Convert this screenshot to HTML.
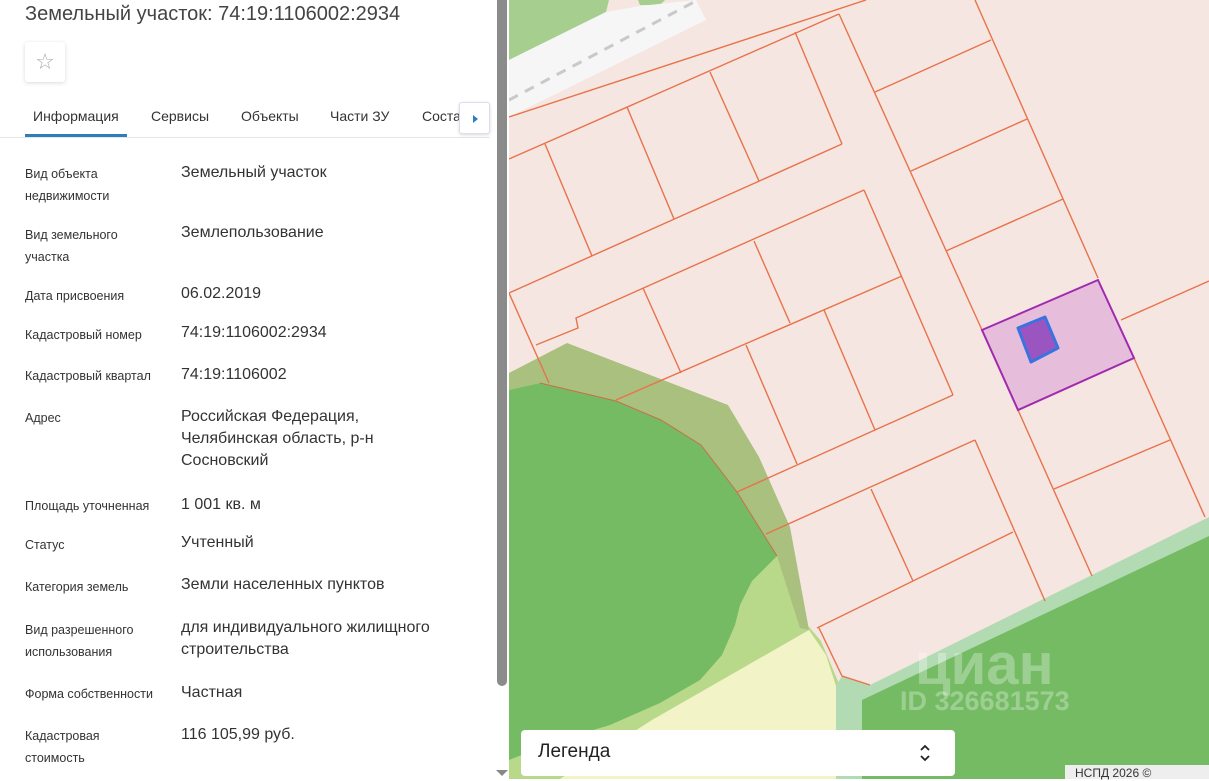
<!DOCTYPE html>
<html><head><meta charset="utf-8"><style>
*{margin:0;padding:0;box-sizing:border-box}
body{width:1209px;height:779px;overflow:hidden;position:relative;background:#fff;font-family:"Liberation Sans","DejaVu Sans",sans-serif}
#left{position:absolute;left:0;top:0;width:509px;height:779px;background:#fff}
h1{position:absolute;left:25px;top:3px;font-size:20px;font-weight:normal;color:#444;white-space:nowrap}
.star{position:absolute;left:25px;top:42px;width:40px;height:40px;background:#fff;border-radius:3px;box-shadow:0 1px 4px rgba(0,0,0,.15);color:#aaa;font-size:22px;text-align:center;line-height:40px}
.tabs{position:absolute;left:0;top:105px;width:490px;height:33px;border-bottom:1px solid #e6e6e6;font-size:14px;color:#333}
.tabs span{position:absolute;top:3px;white-space:nowrap}
.tabs .act{border-bottom:3px solid #2e7fb8;padding-bottom:10px;left:25px;padding-left:8px;padding-right:8px}
.arr{position:absolute;left:459px;top:102px;width:31px;height:32px;background:#fff;border:1px solid #dde;border-radius:3px;box-shadow:0 1px 3px rgba(0,0,0,.15)}
.arr:after{content:"";position:absolute;left:13px;top:12px;border-left:5px solid #2a7ec1;border-top:4px solid transparent;border-bottom:4px solid transparent}
.l{position:absolute;left:25px;font-size:12.5px;line-height:22px;color:#333}
.v{position:absolute;left:181px;font-size:16px;line-height:22px;color:#333}
.sb{position:absolute;left:497px;top:0;width:10px;height:686px;background:#8b8b8b;border-radius:0 0 5px 5px}
.sba{position:absolute;left:496px;top:770px;border-top:6px solid #888;border-left:6px solid transparent;border-right:6px solid transparent}
#map{position:absolute;left:509px;top:0;width:700px;height:779px;overflow:hidden}
.leg{position:absolute;left:521px;top:730px;width:434px;height:46px;background:#fff;border-radius:4px;font-size:19px;color:#222;padding:11px 0 0 17px}
.nspd{position:absolute;left:1065px;top:765px;width:144px;height:14px;background:#eee;font-size:12px;color:#333;padding-left:10px;line-height:16px}
</style></head><body>
<div id="left">
<h1>Земельный участок: 74:19:1106002:2934</h1>
<div class="star">☆</div>
<div class="tabs">
<span class="act">Информация</span>
<span style="left:151px">Сервисы</span>
<span style="left:241px">Объекты</span>
<span style="left:330px">Части ЗУ</span>
<span style="left:422px">Соста</span>
</div>
<div class="arr"></div>
<div class="l" style="top:163px">Вид объекта<br>недвижимости</div><div class="v" style="top:162px">Земельный участок</div>
<div class="l" style="top:224px">Вид земельного<br>участка</div><div class="v" style="top:222px">Землепользование</div>
<div class="l" style="top:285px">Дата присвоения</div><div class="v" style="top:283px">06.02.2019</div>
<div class="l" style="top:324px">Кадастровый номер</div><div class="v" style="top:322px">74:19:1106002:2934</div>
<div class="l" style="top:365px">Кадастровый квартал</div><div class="v" style="top:364px">74:19:1106002</div>
<div class="l" style="top:407px">Адрес</div><div class="v" style="top:406px">Российская Федерация,<br>Челябинская область, р-н<br>Сосновский</div>
<div class="l" style="top:495px">Площадь уточненная</div><div class="v" style="top:494px">1 001 кв. м</div>
<div class="l" style="top:534px">Статус</div><div class="v" style="top:532px">Учтенный</div>
<div class="l" style="top:576px">Категория земель</div><div class="v" style="top:574px">Земли населенных пунктов</div>
<div class="l" style="top:619px">Вид разрешенного<br>использования</div><div class="v" style="top:617px">для индивидуального жилищного<br>строительства</div>
<div class="l" style="top:683px">Форма собственности</div><div class="v" style="top:682px">Частная</div>
<div class="l" style="top:725px">Кадастровая<br>стоимость</div><div class="v" style="top:724px">116 105,99 руб.</div>
<div class="sb"></div><div class="sba"></div>
</div>
<div id="map">
<svg width="700" height="779" viewBox="509 0 700 779" xmlns="http://www.w3.org/2000/svg">
<rect x="509" y="0" width="700" height="779" fill="#f5e6e1"/>
<polygon points="509,0 609,0 606,12 509,60" fill="#a6cf8f"/>
<polygon points="638,0 665,0 660,5 640,5" fill="#a6cf8f"/>
<polygon points="509,60 606,12 640,6 696,0 706,20 509,117" fill="#f6f6f6"/>
<line x1="509" y1="100" x2="694" y2="2" stroke="#c9c9c9" stroke-width="3" stroke-dasharray="10,8"/>
<polygon points="509,779 509,390 540,383 616,401 661,420 701,445 737,492 777,556 804,621 821,641 840,686 840,779" fill="#b9d98a"/>
<polygon points="809,630 826,655 836,686 836,779 560,779 652,720" fill="#f3f3c8"/>
<polygon points="509,373 567,343 728,405 759,457 790,527 809,630 800,628 777,556 737,492 701,445 661,420 616,401 540,383 509,390" fill="#a9c07f"/>
<polygon points="509,390 540,383 616,401 661,420 701,445 737,492 777,556 752,581 740,605 735,625 722,655 700,680 660,703 610,725 560,740 509,760" fill="#74bb63"/>
<polygon points="842,676 870,685 1209,517 1209,779 836,779 836,686" fill="#b3dbb3"/>
<polygon points="862,700 1209,536 1209,779 862,779" fill="#74bb63"/>
<g stroke="#e8734a" stroke-width="1.4" fill="none">
<line x1="509" y1="117" x2="866" y2="0"/>
<line x1="509" y1="159" x2="839" y2="14"/>
<line x1="839" y1="14" x2="982" y2="330"/>
<line x1="975" y1="0" x2="1098" y2="278"/>
<line x1="875" y1="92" x2="991" y2="40"/>
<line x1="911" y1="171" x2="1027" y2="119"/>
<line x1="946" y1="251" x2="1063" y2="199"/>
<line x1="795" y1="32" x2="842" y2="144"/>
<line x1="509" y1="293" x2="842" y2="144"/>
<line x1="710" y1="72" x2="759" y2="181"/>
<line x1="627" y1="107" x2="674" y2="219"/>
<line x1="545" y1="144" x2="592" y2="256"/>
<polyline points="536,345 578,328 576,318 864,190"/>
<line x1="864" y1="190" x2="953" y2="395"/>
<line x1="643" y1="288" x2="681" y2="373"/>
<line x1="754" y1="241" x2="790" y2="323"/>
<line x1="616" y1="400" x2="902" y2="276"/>
<line x1="746" y1="345" x2="797" y2="464"/>
<line x1="824" y1="310" x2="875" y2="430"/>
<line x1="737" y1="492" x2="953" y2="395"/>
<line x1="509" y1="293" x2="549" y2="383"/>
<line x1="766" y1="534" x2="975" y2="440"/>
<line x1="975" y1="440" x2="1045" y2="601"/>
<line x1="871" y1="489" x2="913" y2="581"/>
<line x1="817" y1="628" x2="1013" y2="532"/>
<line x1="1018" y1="410" x2="1092" y2="576"/>
<line x1="1134" y1="358" x2="1205" y2="517"/>
<line x1="1054" y1="489" x2="1170" y2="440"/>
<line x1="1121" y1="320" x2="1209" y2="281"/>
<polyline points="819,628 842,676 870,685"/>
<polyline points="540,383 616,401 661,420 701,445 737,492 777,556" stroke="#c8704a" stroke-width="1"/>
</g>
<polygon points="982,330 1098,280 1134,358 1018,410" fill="#e6bedc" stroke="#a02aae" stroke-width="2"/>
<polygon points="1018,328 1045,317 1058,348 1031,362" fill="#9b55c0" stroke="#3a73e0" stroke-width="3" stroke-linejoin="round"/>
<text x="915" y="684" font-family="Liberation Sans,sans-serif" font-size="58" font-weight="bold" fill="#fff" fill-opacity="0.3">циан</text>
<text x="900" y="710" font-family="Liberation Sans,sans-serif" font-size="27" font-weight="bold" fill="#fff" fill-opacity="0.3">ID 326681573</text>
</svg>
</div>
<div class="leg">Легенда<svg style="position:absolute;left:398px;top:13px" width="12" height="20" viewBox="0 0 12 20"><path d="M2 7 L6 3 L10 7 M2 13 L6 17 L10 13" stroke="#222" stroke-width="1.8" fill="none"/></svg></div>
<div class="nspd">НСПД 2026 ©</div>
</body></html>
